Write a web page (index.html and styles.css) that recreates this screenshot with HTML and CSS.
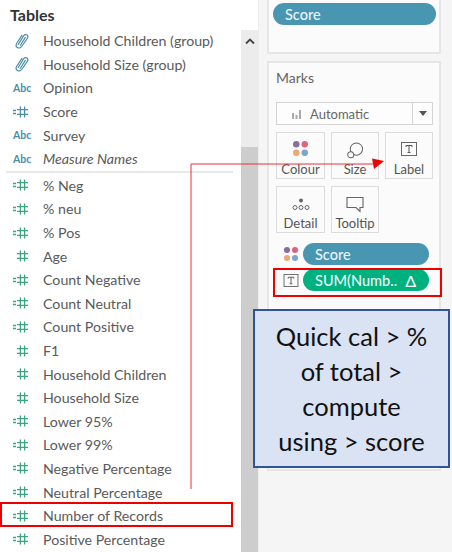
FILE: index.html
```
<!DOCTYPE html>
<html lang="en">
<head>
<meta charset="utf-8">
<title>Tables and Marks</title>
<link rel="stylesheet" href="styles.css">
</head>
<body>
<svg width="0" height="0" class="defs">
  <symbol id="hash" viewBox="0 0 17 12">
    <path d="M1 4.500h3M1 7.500h3M5 3.700h11M5 8.300h11M8.400 .5v11M12.600 .5v11" fill="none" stroke="currentColor" stroke-width="1.300"/>
  </symbol>
  <symbol id="hash-plain" viewBox="0 0 17 12">
    <path d="M5 3.700h11M5 8.300h11M8.400 .5v11M12.600 .5v11" fill="none" stroke="currentColor" stroke-width="1.300"/>
  </symbol>
  <symbol id="clip" viewBox="0 0 14 16">
    <path d="M3.200 11.500 8.600 2.900c.9-1.400 2.400-1.700 3.400-1 1 .7 1.100 2.100.3 3.400L7 13c-1.200 1.900-3.200 2.500-4.600 1.600C1 13.700.7 11.900 1.900 10L6.900 2.300M5.400 12.200 10.300 4.400" fill="none" stroke="currentColor" stroke-width="1.200" stroke-linecap="round"/>
  </symbol>
  <symbol id="tbox" viewBox="0 0 16 14">
    <rect x=".5" y=".5" width="15" height="13" fill="none" stroke="#666"/>
    <path d="M5 5V3.500h6V5M8 3.500v7M6.500 10.500h3" fill="none" stroke="#555"/>
  </symbol>
  <symbol id="dots" viewBox="0 0 20 20">
    <circle cx="5" cy="5" r="3.800" fill="#8a6d9c"/>
    <circle cx="15" cy="5" r="3.800" fill="#e0637d"/>
    <circle cx="5" cy="15" r="3.800" fill="#eda774"/>
    <circle cx="15" cy="15" r="3.800" fill="#7da3cf"/>
  </symbol>
</svg>

<div class="page">
  <section class="fields">
    <h2 class="fields-title">Tables</h2>
    <ul class="field-list">
      <li class="field dim"><svg class="ic-clip"><use href="#clip"/></svg><span>Household Children (group)</span></li>
      <li class="field dim"><svg class="ic-clip"><use href="#clip"/></svg><span>Household Size (group)</span></li>
      <li class="field dim"><b class="abc">Abc</b><span>Opinion</span></li>
      <li class="field dim"><svg class="ic-hash"><use href="#hash"/></svg><span>Score</span></li>
      <li class="field dim"><b class="abc">Abc</b><span>Survey</span></li>
      <li class="field dim"><b class="abc">Abc</b><span class="em">Measure Names</span></li>
    </ul>
    <hr class="divider">
    <ul class="field-list">
      <li class="field meas"><svg class="ic-hash"><use href="#hash"/></svg><span>% Neg</span></li>
      <li class="field meas"><svg class="ic-hash"><use href="#hash"/></svg><span>% neu</span></li>
      <li class="field meas"><svg class="ic-hash"><use href="#hash"/></svg><span>% Pos</span></li>
      <li class="field meas"><svg class="ic-hash"><use href="#hash-plain"/></svg><span>Age</span></li>
      <li class="field meas"><svg class="ic-hash"><use href="#hash"/></svg><span>Count Negative</span></li>
      <li class="field meas"><svg class="ic-hash"><use href="#hash"/></svg><span>Count Neutral</span></li>
      <li class="field meas"><svg class="ic-hash"><use href="#hash"/></svg><span>Count Positive</span></li>
      <li class="field meas"><svg class="ic-hash"><use href="#hash-plain"/></svg><span>F1</span></li>
      <li class="field meas"><svg class="ic-hash"><use href="#hash-plain"/></svg><span>Household Children</span></li>
      <li class="field meas"><svg class="ic-hash"><use href="#hash-plain"/></svg><span>Household Size</span></li>
      <li class="field meas"><svg class="ic-hash"><use href="#hash"/></svg><span>Lower 95%</span></li>
      <li class="field meas"><svg class="ic-hash"><use href="#hash"/></svg><span>Lower 99%</span></li>
      <li class="field meas"><svg class="ic-hash"><use href="#hash"/></svg><span>Negative Percentage</span></li>
      <li class="field meas"><svg class="ic-hash"><use href="#hash"/></svg><span>Neutral Percentage</span></li>
      <li class="field meas"><svg class="ic-hash"><use href="#hash"/></svg><span>Number of Records</span></li>
      <li class="field meas"><svg class="ic-hash"><use href="#hash"/></svg><span>Positive Percentage</span></li>
    </ul>
  </section>

  <div class="scrollbar">
    <svg class="chevron" viewBox="0 0 10 7"><path d="M1 5.500 5 1.500l4 4" fill="none" stroke="#444" stroke-width="1.800"/></svg>
    <div class="thumb"></div>
  </div>

  <aside class="side">
    <div class="card card-top">
      <div class="pill blue wide">Score</div>
    </div>
    <div class="card card-marks">
      <h3 class="marks-title">Marks</h3>
      <div class="select">
        <svg class="bars" viewBox="0 0 11 10"><path d="M1 4h2v6H1zM4.500 6h2v4h-2zM8 1h2v9H8z" fill="#aaa"/></svg>
        <span class="select-label">Automatic</span>
        <span class="select-arrow"><i class="caret"></i></span>
      </div>
      <div class="mark-grid">
        <div class="mark"><svg class="mk-icon dots"><use href="#dots"/></svg><span>Colour</span></div>
        <div class="mark">
          <svg class="mk-icon" viewBox="0 0 18 18"><circle cx="10.500" cy="7.500" r="6.500" fill="none" stroke="#666" stroke-width="1.100"/><circle cx="4.500" cy="13.500" r="3.200" fill="#fafafa" stroke="#666" stroke-width="1.100"/></svg>
          <span>Size</span>
        </div>
        <div class="mark"><svg class="mk-icon tbox"><use href="#tbox"/></svg><span>Label</span></div>
        <div class="mark">
          <svg class="mk-icon" viewBox="0 0 18 14"><circle cx="9" cy="3" r="2" fill="#666"/><circle cx="3" cy="10" r="2" fill="none" stroke="#666"/><circle cx="9" cy="10" r="2" fill="none" stroke="#666"/><circle cx="15" cy="10" r="2" fill="none" stroke="#666"/></svg>
          <span>Detail</span>
        </div>
        <div class="mark">
          <svg class="mk-icon" viewBox="0 0 18 16"><path d="M1 1h16v10h-3v4l-4-4H1z" fill="none" stroke="#666" stroke-width="1.100"/></svg>
          <span>Tooltip</span>
        </div>
      </div>
      <div class="shelves">
        <div class="shelf"><svg class="shelf-icon"><use href="#dots"/></svg><div class="pill blue">Score</div></div>
        <div class="shelf"><svg class="shelf-icon t"><use href="#tbox"/></svg><div class="pill green"><span>SUM(Numb..</span><span class="delta">Δ</span></div></div>
      </div>
    </div>
  </aside>

  <div class="mark-box box-records"></div>
  <div class="mark-box box-sum"></div>
  <svg class="connector" viewBox="0 0 452 552"><path d="M191 489V164H373" fill="none" stroke="#e8303a" stroke-width="1"/><path d="M372 158.500 384 161 374 169z" fill="#f00000"/></svg>
  <div class="callout">Quick cal &gt; %<br>of total &gt;<br>compute<br>using &gt; score</div>
</div>
</body>
</html>
```
FILE: styles.css
```
* { box-sizing: border-box; }
html, body { margin: 0; padding: 0; }
body { width: 452px; height: 552px; overflow: hidden; background: #fff; font-family: Lato, "Liberation Sans", sans-serif; }
.defs { position: absolute; }
.page { position: relative; display: flex; width: 452px; height: 552px; overflow: hidden; }

.fields { width: 241px; flex: none; padding: 0 8px 0 6px; background: #fff; }
.fields-title { margin: 0; padding: 5px 0 0 4px; height: 29px; font-size: 16px; line-height: 20px; font-weight: 700; color: #333; }
.field-list { list-style: none; margin: 0; padding: 0; }
.field { display: flex; align-items: center; height: 23.600px; font-size: 14.200px; color: #5a5a5a; }
.field span { white-space: nowrap; }
.field > :first-child { flex: none; }
.field .em { font-style: italic; }
.dim svg, .abc { color: #4a8fa8; }
.meas svg { color: #3aa57f; }
.ic-clip { width: 14px; height: 16px; margin: 0 14px 0 9px; }
.ic-hash { width: 17px; height: 12px; margin: 0 14px 0 6px; }
.abc { width: 37px; padding-left: 7px; font-size: 10.500px; font-weight: 700; }
.divider { height: 2px; border: 0; margin: 0 0 1px 0; background: #e9e9e9; }

.scrollbar { width: 17px; flex: none; margin-top: 30px; background: #ececec; display: flex; flex-direction: column; align-items: center; }
.chevron { width: 10px; height: 7px; margin-top: 8px; flex: none; }
.thumb { margin-top: 102px; flex: 1; width: 100%; background: #cdcdcd; }

.side { flex: 1; background: #f5f5f5; padding: 0 11px 0 8px; border-left: 1px solid #ededed; }
.card { background: #fbfbfb; border: 2px solid #e6e6e6; }
.card-top { height: 54px; padding: 1px 3px 0 4px; border-top: 0; }
.card-marks { margin-top: 7px; height: 410px; padding: 7px 6px 0 7px; }
.marks-title { margin: 0; font-size: 14px; line-height: 16px; font-weight: 400; color: #666; }

.pill { display: flex; align-items: center; height: 22px; border-radius: 11px; color: #e9f4f7; font-size: 14.500px; font-weight: 500; padding-left: 12px; }
.blue { background: #4996b2; }
.green { background: #00b180; justify-content: space-between; padding-right: 13px; }
.wide { margin-top: 2px; }
.delta { font-size: 16px; font-weight: 400; color: #fff; }

.select { display: flex; align-items: center; height: 23px; margin-top: 16px; background: #fdfdfd; border: 1px solid #d4d4d4; font-size: 13px; color: #666; }
.bars { width: 11px; height: 10px; margin: 0 8px 0 14px; }
.select-label { flex: 1; }
.select-arrow { width: 20px; height: 100%; border-left: 1px solid #d4d4d4; display: flex; align-items: center; justify-content: center; }
.caret { width: 0; height: 0; border: 4px solid transparent; border-top: 5px solid #555; border-bottom: 0; }

.mark-grid { display: grid; grid-template-columns: 49px 48px 48px; gap: 7px 6px; margin-top: 7px; }
.mark { display: flex; flex-direction: column; align-items: center; justify-content: flex-end; height: 47px; padding-bottom: 1px; gap: 2px; background: #fbfbfb; border: 1px solid #dcdcdc; font-size: 13px; color: #555; }
.mk-icon { width: 18px; height: 17px; }
.dots { width: 17px; height: 17px; margin-bottom: 2px; }
.tbox { width: 16px; height: 14px; margin-bottom: 3px; }

.shelves { display: flex; flex-direction: column; gap: 4px; margin-top: 10px; }
.shelf { display: flex; align-items: center; height: 22px; }
.shelf-icon { width: 16px; height: 16px; margin: 0 4px 0 7px; flex: none; }
.shelf-icon.t { height: 13px; }
.shelf .pill { flex: 1; margin-right: 4px; padding-left: 12px; }

.mark-box { position: absolute; border: 2px solid #ee0000; }
.box-records { left: 0; top: 502px; width: 233px; height: 25px; }
.box-sum { left: 273px; top: 268px; width: 169px; height: 29px; }
.connector { position: absolute; left: 0; top: 0; width: 452px; height: 552px; }
.callout { position: absolute; left: 253px; top: 309px; width: 197px; height: 159px; display: flex; align-items: center; justify-content: center; text-align: center; background: #dae3f3; border: 2px solid #2f5597; font-size: 25.500px; line-height: 35px; color: #111; }
```
